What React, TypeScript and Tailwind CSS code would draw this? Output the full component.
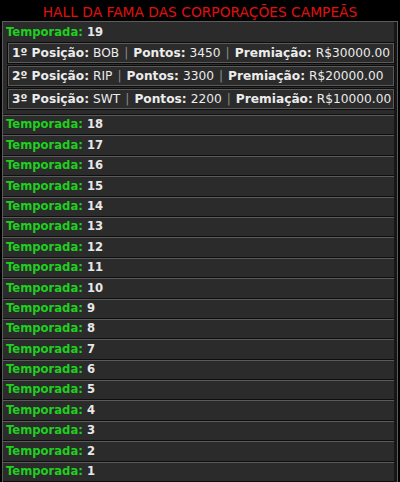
const podium = [
  { pos: "1º", name: "BOB", pts: 3450, prize: "R$30000.00" },
  { pos: "2º", name: "RIP", pts: 3300, prize: "R$20000.00" },
  { pos: "3º", name: "SWT", pts: 2200, prize: "R$10000.00" },
];

const seasons = Array.from({ length: 18 }, (_, i) => 18 - i);

function SeasonLabel({ n }: { n: number }) {
  return (
    <span className="font-bold text-[11.6px]">
      <span className="text-[#1fd01f]">Temporada:</span>{" "}
      <span className="text-[#e8e8e8]">{n}</span>
    </span>
  );
}

export default function App() {
  return (
    <div
      className="w-[400px] h-[482px] bg-black overflow-hidden text-[11px] leading-none"
      style={{ fontFamily: '"DejaVu Sans", Verdana, sans-serif' }}
    >
      <div className="h-[21px] flex items-center justify-center pt-[5px] text-[13.8px] text-[#e01010]">
        HALL DA FAMA DAS CORPORAÇÕES CAMPEÃS
      </div>

      <div className="mx-[2px] w-[396px] border border-[#5c5c5c] bg-[#161616] pr-[3px]">
        <div className="bg-[#2b2b2b] border-b border-[#111] pb-[5px]">
          <div className="h-[21px] flex items-center pl-[3px]">
            <SeasonLabel n={19} />
          </div>
          <div className="flex flex-col gap-[3px] pl-[5px]">
            {podium.map((p) => (
              <div
                key={p.pos}
                className="h-[20px] flex items-center px-[3px] bg-[#2b2b2b] border border-[#5a5a5a] outline outline-1 outline-[#0c0c0c] text-[12.2px] text-[#ececec] whitespace-nowrap"
              >
                <span className="font-bold">{p.pos} Posição:</span>
                <span className="ml-[4px]">{p.name}</span>
                <span className="mx-[5px] text-[#8a8a8a]">|</span>
                <span className="font-bold">Pontos:</span>
                <span className="ml-[4px]">{p.pts}</span>
                <span className="mx-[5px] text-[#8a8a8a]">|</span>
                <span className="font-bold">Premiação:</span>
                <span className="ml-[4px]">{p.prize}</span>
              </div>
            ))}
          </div>
        </div>

        {seasons.map((n) => (
          <div
            key={n}
            className="h-[20.4px] flex items-center pl-[3px] bg-[#2b2b2b] border-t border-[#5a5a5a] border-b border-b-[#0e0e0e]"
          >
            <SeasonLabel n={n} />
          </div>
        ))}
      </div>
    </div>
  );
}
